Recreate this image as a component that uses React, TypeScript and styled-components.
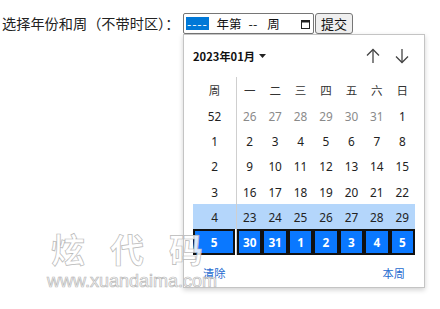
import React from 'react';
import styled, { createGlobalStyle } from 'styled-components';

const GlobalStyle = createGlobalStyle`
  html, body {
    margin: 0;
    padding: 0;
    background: #fff;
    font-family: "Noto Sans CJK SC", "Noto Sans", sans-serif;
    color: #111;
  }
`;

const Page = styled.div`
  position: relative;
  width: 440px;
  height: 309px;
  overflow: hidden;
`;

const FormRow = styled.form`
  display: flex;
  align-items: center;
  padding: 13px 0 0 2px;
  margin: 0;
`;

const Label = styled.label`
  flex: none;
  font-size: 14.2px;
  line-height: 21px;
  color: #222;
  width: 181px;
  white-space: nowrap;
  overflow: visible;
`;

const WeekInput = styled.div`
  box-sizing: border-box;
  width: 131px;
  height: 21px;
  border: 1px solid #767676;
  border-radius: 2px;
  display: flex;
  align-items: center;
  padding-left: 2px;
  font-size: 12.5px;
  color: #111;
`;

const Segment = styled.span<{ $active?: boolean; $gap?: number }>`
  display: inline-block;
  line-height: 13px;
  margin-left: ${p => p.$gap ?? 0}px;
  padding: 0 ${p => (p.$active ? 1 : 0)}px;
  background: ${p => (p.$active ? '#0078d7' : 'transparent')};
  color: ${p => (p.$active ? '#fff' : '#111')};
  letter-spacing: ${p => (p.$active ? '0.8px' : '0')};
`;

const CalendarIcon = styled.svg`
  margin-left: auto;
  margin-right: 3px;
`;

const SubmitButton = styled.button`
  box-sizing: border-box;
  margin-left: 1px;
  width: 38px;
  height: 21px;
  padding: 0;
  font-family: "Noto Sans CJK SC", sans-serif;
  font-size: 13px;
  color: #111;
  background: #efefef;
  border: 1px solid #767676;
  border-radius: 3px;
`;

const Picker = styled.div`
  position: absolute;
  left: 183px;
  top: 34px;
  width: 242px;
  height: 254px;
  box-sizing: border-box;
  background: #fff;
  border: 1px solid #c4c4c4;
  box-shadow: 0 2px 5px rgba(0, 0, 0, 0.18);
  display: flex;
  flex-direction: column;
`;

const PickerHeader = styled.div`
  height: 42px;
  display: flex;
  align-items: center;
  padding: 0 12px 0 9px;
`;

const MonthButton = styled.div`
  display: flex;
  align-items: center;
  gap: 4px;
  font-family: "Noto Sans CJK SC", sans-serif;
  font-weight: 700;
  font-size: 11.2px;
  color: #111;
`;

const NavGroup = styled.div`
  margin-left: auto;
  display: flex;
  gap: 9px;
`;

const NavButton = styled.div`
  width: 20px;
  height: 20px;
  display: flex;
  align-items: center;
  justify-content: center;
`;

const Table = styled.div`
  margin: 0 9px;
  display: flex;
  flex-direction: column;
`;

const Row = styled.div<{ $height: number; $band?: boolean }>`
  display: grid;
  grid-template-columns: 43px 1px repeat(7, 1fr);
  height: ${p => p.$height}px;
  background: ${p => (p.$band ? '#b4d6fb' : 'transparent')};
`;

const Separator = styled.div`
  background: #cfcfcf;
`;

const Cell = styled.div<{ $muted?: boolean; $selected?: boolean; $week?: boolean }>`
  box-sizing: border-box;
  display: flex;
  align-items: center;
  justify-content: center;
  font-family: "Noto Sans", "Noto Sans CJK SC", sans-serif;
  font-size: 11.8px;
  color: ${p => (p.$selected ? '#fff' : p.$muted ? '#8a8a8a' : '#222')};
  font-weight: ${p => (p.$selected ? 700 : 400)};
  background: ${p => (p.$selected ? '#0a78ff' : 'transparent')};
  border: ${p => (p.$selected ? '2px solid #111' : 'none')};
  margin-right: ${p => (p.$selected && p.$week ? 1 : 0)}px;
`;

const HeadCell = styled(Cell)`
  font-family: "Noto Sans CJK SC", sans-serif;
  font-size: 11.5px;
  color: #333;
`;

const Footer = styled.div`
  flex: 1;
  display: flex;
  align-items: center;
  justify-content: space-between;
  padding: 4px 19px 0 19px;
`;

const LinkButton = styled.span`
  font-family: "Noto Sans CJK SC", sans-serif;
  font-size: 11.2px;
  color: #2369cf;
`;

const Watermark = styled.div`
  position: absolute;
  left: 47px;
  top: 226px;
  pointer-events: none;
  display: flex;
  flex-direction: column;
  color: rgba(255, 255, 255, 0.85);
  -webkit-text-stroke: 0.7px #b8b8b8;
`;

const WatermarkTitle = styled.div`
  font-family: "Noto Sans CJK SC", sans-serif;
  font-weight: 700;
  font-size: 34px;
  line-height: 46px;
  letter-spacing: 25px;
  padding-left: 4px;
`;

const WatermarkUrl = styled.div`
  font-family: "Liberation Sans", Arial, sans-serif;
  font-size: 18px;
  line-height: 18px;
`;

const weekdays = ['一', '二', '三', '四', '五', '六', '日'];

type Week = { no: number; days: number[]; mutedUntil?: number };

const weeks: Week[] = [
  { no: 52, days: [26, 27, 28, 29, 30, 31, 1], mutedUntil: 6 },
  { no: 1, days: [2, 3, 4, 5, 6, 7, 8] },
  { no: 2, days: [9, 10, 11, 12, 13, 14, 15] },
  { no: 3, days: [16, 17, 18, 19, 20, 21, 22] },
  { no: 4, days: [23, 24, 25, 26, 27, 28, 29] },
  { no: 5, days: [30, 31, 1, 2, 3, 4, 5] },
];

const ArrowIcon = ({ down }: { down?: boolean }) => (
  <svg width="14" height="16" viewBox="0 0 14 16" fill="none" stroke="#444" strokeWidth="1.3">
    {down ? (
      <>
        <path d="M7 1v13.5" />
        <path d="M1 8.5l6 6 6-6" />
      </>
    ) : (
      <>
        <path d="M7 15V1.5" />
        <path d="M1 7.5l6-6 6 6" />
      </>
    )}
  </svg>
);

const App: React.FC = () => {
  return (
    <Page>
      <GlobalStyle />
      <FormRow onSubmit={e => e.preventDefault()}>
        <Label>选择年份和周（不带时区）：</Label>
        <WeekInput>
          <Segment $active>----</Segment>
          <Segment $gap={8}>年第</Segment>
          <Segment $gap={7}>--</Segment>
          <Segment $gap={10}>周</Segment>
          <CalendarIcon width="9" height="10" viewBox="0 0 9 10" fill="none" stroke="#222">
            <rect x="0.5" y="1.5" width="8" height="8" strokeWidth="1" />
            <path d="M0.5 2.5h8" strokeWidth="2" />
          </CalendarIcon>
        </WeekInput>
        <SubmitButton type="submit">提交</SubmitButton>
      </FormRow>

      <Picker>
        <PickerHeader>
          <MonthButton>
            2023年01月
            <svg width="7" height="4" viewBox="0 0 7 4">
              <path d="M0 0h7L3.5 4z" fill="#222" />
            </svg>
          </MonthButton>
          <NavGroup>
            <NavButton><ArrowIcon /></NavButton>
            <NavButton><ArrowIcon down /></NavButton>
          </NavGroup>
        </PickerHeader>

        <Table>
          <Row $height={26}>
            <HeadCell>周</HeadCell>
            <Separator />
            {weekdays.map(d => (
              <HeadCell key={d}>{d}</HeadCell>
            ))}
          </Row>
          {weeks.map(w => {
            const selected = w.no === 5;
            return (
              <Row key={w.no} $height={25.3} $band={w.no === 4}>
                <Cell $week $selected={selected}>{w.no}</Cell>
                <Separator />
                {w.days.map((d, i) => (
                  <Cell
                    key={i}
                    $selected={selected}
                    $muted={w.mutedUntil !== undefined && i < w.mutedUntil}
                  >
                    {d}
                  </Cell>
                ))}
              </Row>
            );
          })}
        </Table>

        <Footer>
          <LinkButton>清除</LinkButton>
          <LinkButton>本周</LinkButton>
        </Footer>
      </Picker>

      <Watermark>
        <WatermarkTitle>炫代码</WatermarkTitle>
        <WatermarkUrl>www.xuandaima.com</WatermarkUrl>
      </Watermark>
    </Page>
  );
};

export default App;
